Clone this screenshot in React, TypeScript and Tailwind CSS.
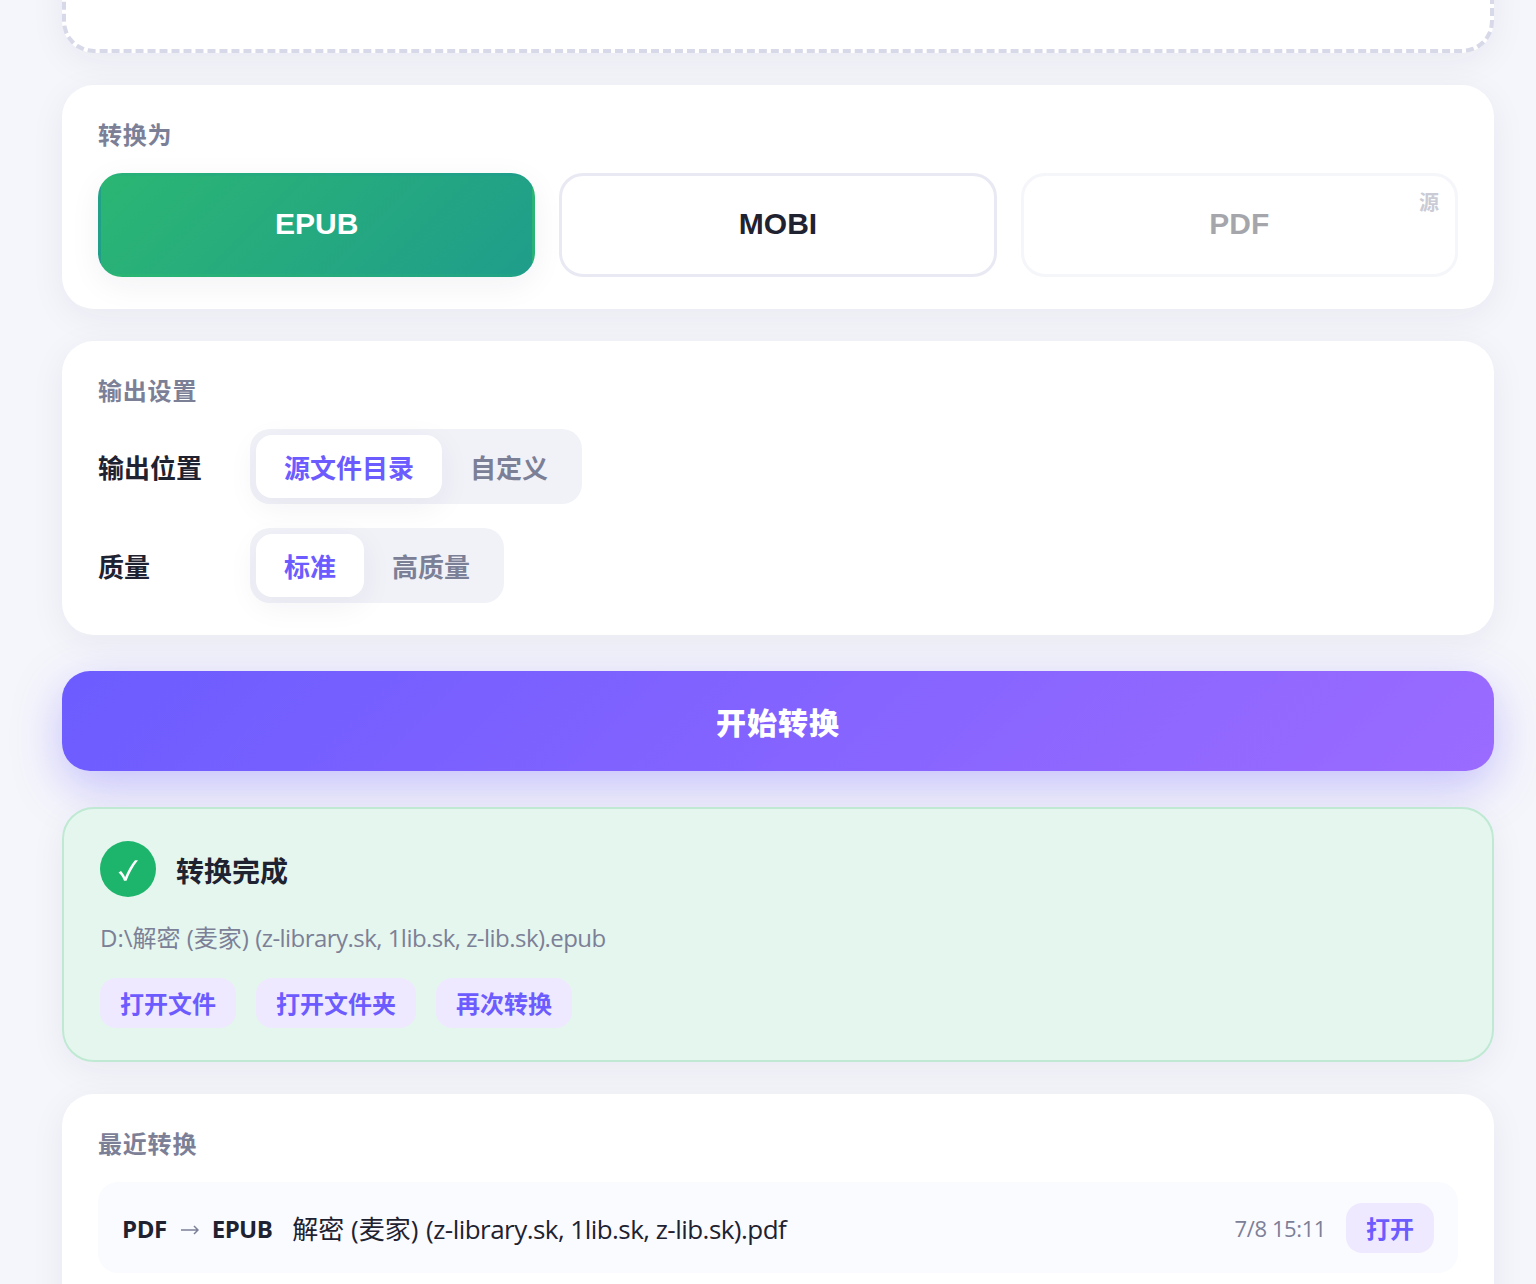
import type { ReactNode } from "react";
import { clsx } from "clsx";

interface Format {
  name: string;
  state: "active" | "idle" | "source";
}

interface Setting {
  label: string;
  options: string[];
}

const formats: Format[] = [
  { name: "EPUB", state: "active" },
  { name: "MOBI", state: "idle" },
  { name: "PDF", state: "source" },
];

const settings: Setting[] = [
  { label: "输出位置", options: ["源文件目录", "自定义"] },
  { label: "质量", options: ["标准", "高质量"] },
];

const doneActions = ["打开文件", "打开文件夹", "再次转换"];

function Card({ title, children }: { title: string; children: ReactNode }) {
  return (
    <section className="rounded-[32px] bg-white px-9 py-8 shadow-[0_8px_36px_rgba(30,30,80,0.06)]">
      <h2 className="mb-5 h-9 text-2xl/9 font-bold tracking-[0.8px] text-[#7c8097]">
        {title}
      </h2>
      {children}
    </section>
  );
}

function SmallButton({ children }: { children: ReactNode }) {
  return (
    <button className="h-[50px] shrink-0 rounded-2xl bg-[#efe9ff] px-5 pt-0.5 text-2xl font-bold text-[#6c5cff]">
      {children}
    </button>
  );
}

function FormatButton({ name, state }: Format) {
  return (
    <button
      className={clsx(
        "relative h-[104px] rounded-3xl border-3 pb-1 font-['Liberation_Sans',Arial,sans-serif] text-[30px] font-bold",
        state === "active" &&
          "border-transparent bg-linear-[135deg,#2bb673,#1f9d8b] text-white shadow-[0_8px_32px_rgba(30,30,80,0.06)]",
        state === "idle" && "border-[#e8e9f3] bg-white text-[#1f2230]",
        state === "source" && "border-[#e8e9f3] bg-white text-[#1f2230] opacity-40"
      )}
    >
      {name}
      {state === "source" && (
        <span className="absolute top-3 right-4 font-['Noto_Sans_CJK_SC',sans-serif] text-xl/7 text-[#7c8097]">
          源
        </span>
      )}
    </button>
  );
}

function Segmented({ options }: { options: string[] }) {
  return (
    <div className="flex h-[75px] rounded-[20px] bg-[#f1f2f8] p-1.5">
      {options.map((option, index) => (
        <button
          key={option}
          className={clsx(
            "rounded-2xl px-7 pt-1 text-[26px] font-bold",
            index === 0
              ? "bg-white text-[#6c5cff] shadow-[0_8px_32px_rgba(30,30,80,0.06)]"
              : "text-[#7c8097]"
          )}
        >
          {option}
        </button>
      ))}
    </div>
  );
}

export default function App() {
  return (
    <div className="h-[1284px] overflow-hidden bg-[#f5f6fb] font-['Open_Sans','Noto_Sans_CJK_SC',sans-serif] text-[#1f2230]">
      <main className="-mt-[347px] mr-[42px] ml-[62px] flex flex-col gap-8">
        <div className="h-[400px] rounded-[32px] border-4 border-dashed border-[#d8d9e8] bg-white shadow-[0_8px_36px_rgba(30,30,80,0.06)]" />

        <Card title="转换为">
          <div className="grid grid-cols-3 gap-6">
            {formats.map((format) => (
              <FormatButton key={format.name} {...format} />
            ))}
          </div>
        </Card>

        <Card title="输出设置">
          <div className="flex flex-col gap-6">
            {settings.map((setting) => (
              <div key={setting.label} className="flex items-center">
                <span className="w-[152px] pt-1 text-[26px] font-bold">
                  {setting.label}
                </span>
                <Segmented options={setting.options} />
              </div>
            ))}
          </div>
        </Card>

        <button className="my-1 h-[100px] rounded-[28px] bg-linear-[135deg,#6c5cff,#9b6bff] pt-0.5 text-[30px] font-black tracking-[1px] text-white shadow-[0_16px_48px_rgba(108,92,255,0.35)]">
          开始转换
        </button>

        <section className="h-[255px] rounded-[32px] border-2 border-[#bfe9d3] bg-[#e5f6ee] px-9 py-8 shadow-[0_8px_36px_rgba(30,30,80,0.06)]">
          <div className="flex items-center gap-5">
            <span className="flex size-14 items-center justify-center rounded-full bg-[#1cb56b]">
              <svg viewBox="0 0 20 24" className="mt-1 h-6 w-5 fill-white">
                <path d="M0.500 13.500 3 12C4.800 13.700 6.200 16 7.100 18.200 9.500 12.300 13 6 17 1.200H20C15 7.500 11 14.500 8.500 21.800H6C5 18.500 3 15.500 0.500 13.500Z" />
              </svg>
            </span>
            <h3 className="pt-1 text-[28px] font-bold">转换完成</h3>
          </div>
          <p className="mt-[23px] mb-[22px] h-9 text-2xl/9 text-[#7c8097]">
            D:\解密 (麦家){" "}
            <span className="tracking-[-0.54px]">
              (z-library.sk, 1lib.sk, z-lib.sk).epub
            </span>
          </p>
          <div className="flex gap-5">
            {doneActions.map((action) => (
              <SmallButton key={action}>{action}</SmallButton>
            ))}
          </div>
        </section>

        <Card title="最近转换">
          <div className="mb-10 flex h-[91px] items-center rounded-[20px] bg-[#fafbff] px-6">
            <span className="pt-0.5 text-2xl font-bold tracking-[-0.4px]">PDF</span>
            <svg viewBox="0 0 18 12" className="mt-1 mr-[13px] ml-3.5 h-3 w-[18px] fill-none stroke-[#7c8097] stroke-[1.5]">
              <path d="M0 6h17M13 2 17 6l-4 4" />
            </svg>
            <span className="pt-0.5 text-2xl font-bold tracking-[-0.6px]">EPUB</span>
            <span className="ml-5 flex-1 pt-1 text-[26px]">
              解密 (麦家){" "}
              <span className="ml-px tracking-[-0.54px]">
                (z-library.sk, 1lib.sk, z-lib.sk).pdf
              </span>
            </span>
            <span className="mr-5 pt-0.5 text-[22px] tracking-[-0.4px] text-[#7c8097]">7/8 15:11</span>
            <SmallButton>打开</SmallButton>
          </div>
        </Card>
      </main>
    </div>
  );
}
